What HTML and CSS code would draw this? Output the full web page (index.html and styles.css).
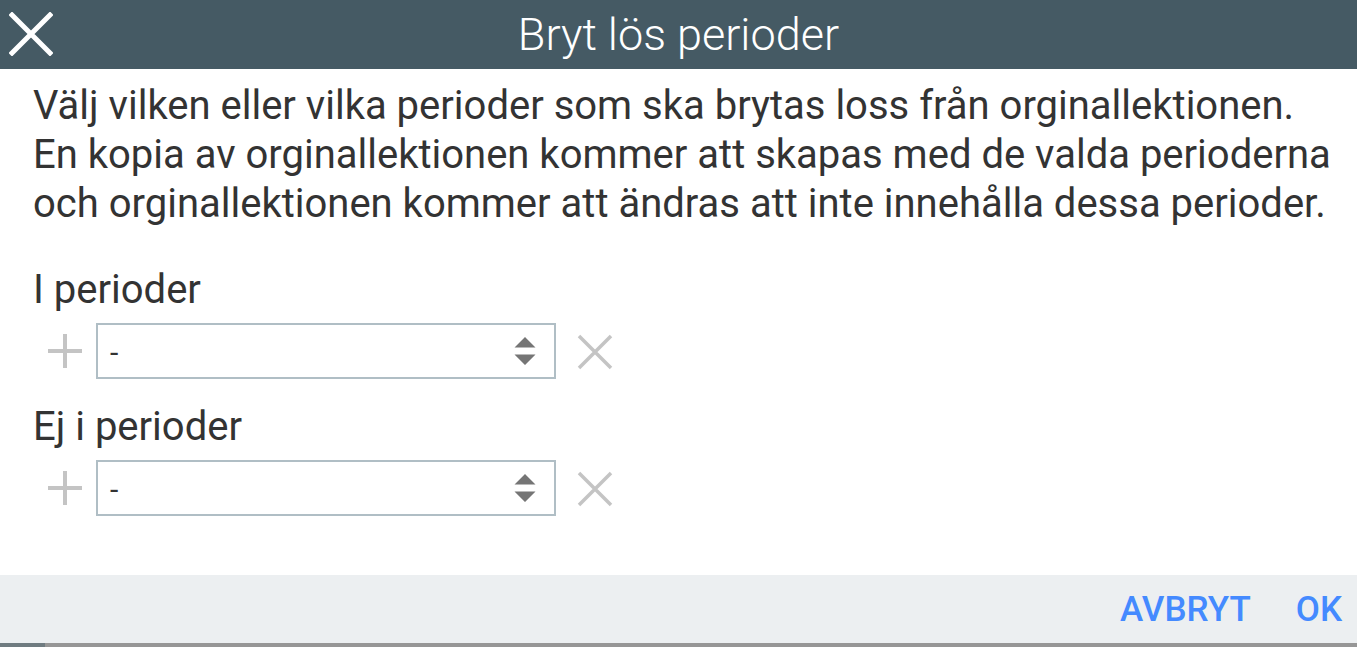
FILE: index.html
```html
<!DOCTYPE html>
<html lang="sv">
<head>
    <meta charset="UTF-8">
    <meta name="viewport" content="width=device-width, initial-scale=1.0">
    <title>Bryt lös perioder</title>
    <link rel="stylesheet" href="styles.css">
</head>
<body>
    <div class="dialog">
        <div class="header">
            <button class="close" aria-label="Stäng">
                <svg width="44" height="44" viewBox="0 0 44 44">
                    <path d="M3 3 L41 41 M41 3 L3 41" stroke="#fff" stroke-width="5" stroke-linecap="square"/>
                </svg>
            </button>
            <h1>Bryt lös perioder</h1>
        </div>

        <div class="content">
            <p class="info">
                Välj vilken eller vilka perioder som ska brytas loss från orginallektionen.<br>
                En kopia av orginallektionen kommer att skapas med de valda perioderna<br>
                och orginallektionen kommer att ändras att inte innehålla dessa perioder.
            </p>

            <div class="field">
                <label>I perioder</label>
                <div class="row">
                    <span class="add">
                        <svg width="36" height="36" viewBox="0 0 36 36">
                            <path d="M18 1 V35 M1 18 H35" stroke="#c4c4c4" stroke-width="4"/>
                        </svg>
                    </span>
                    <div class="select">
                        <span>-</span>
                        <svg width="22" height="28" viewBox="0 0 22 28">
                            <path d="M11 0 L21.5 10.5 H0.5 Z M11 28 L21.5 17.5 H0.5 Z" fill="#757575"/>
                        </svg>
                    </div>
                    <span class="remove">
                        <svg width="36" height="36" viewBox="0 0 36 36">
                            <path d="M2 2 L34 34 M34 2 L2 34" stroke="#c4c4c4" stroke-width="3.5"/>
                        </svg>
                    </span>
                </div>
            </div>

            <div class="field">
                <label>Ej i perioder</label>
                <div class="row">
                    <span class="add">
                        <svg width="36" height="36" viewBox="0 0 36 36">
                            <path d="M18 1 V35 M1 18 H35" stroke="#c4c4c4" stroke-width="4"/>
                        </svg>
                    </span>
                    <div class="select">
                        <span>-</span>
                        <svg width="22" height="28" viewBox="0 0 22 28">
                            <path d="M11 0 L21.5 10.5 H0.5 Z M11 28 L21.5 17.5 H0.5 Z" fill="#757575"/>
                        </svg>
                    </div>
                    <span class="remove">
                        <svg width="36" height="36" viewBox="0 0 36 36">
                            <path d="M2 2 L34 34 M34 2 L2 34" stroke="#c4c4c4" stroke-width="3.5"/>
                        </svg>
                    </span>
                </div>
            </div>
        </div>

        <div class="footer">
            <button class="action">AVBRYT</button>
            <button class="action">OK</button>
        </div>
        <div class="scrollbar"><span class="thumb"></span></div>
    </div>
</body>
</html>
```

FILE: styles.css
```css
body {
    margin: 0;
    font-family: Roboto, "Liberation Sans", sans-serif;
    color: #333;
    background: #fff;
}
.dialog {
    height: 647px;
    display: flex;
    flex-direction: column;
    overflow: hidden;
}
.header {
    height: 69px;
    background-color: #455a64;
    display: flex;
    align-items: center;
    justify-content: center;
    position: relative;
    flex-shrink: 0;
}
.header h1 {
    margin: 0;
    color: #fff;
    font-weight: 300;
    font-size: 45px;
}
.close {
    position: absolute;
    left: 9px;
    top: 12px;
    padding: 0;
    border: none;
    background: none;
    cursor: pointer;
}
.content {
    flex: 1;
    min-height: 0;
    padding: 12px 16px 0 33px;
}
.info {
    margin: 0 0 40px;
    font-size: 40px;
    line-height: 49px;
    white-space: nowrap;
}
.field label {
    display: block;
    font-size: 40px;
    line-height: 44px;
}
.row {
    display: flex;
    align-items: center;
    margin: 11px 0 26px 14px;
}
.add {
    display: flex;
    width: 49px;
}
.select {
    height: 52px;
    width: 426px;
    border: 2px solid #b0bec5;
    display: flex;
    align-items: center;
    justify-content: space-between;
    padding: 0 18px 0 12px;
    box-sizing: content-box;
    font-size: 30px;
}
.select span {
    margin-top: 2px;
}
.remove {
    display: flex;
    margin-left: 21px;
    margin-top: 2px;
}
.footer {
    height: 68px;
    background-color: #eceff1;
    display: flex;
    justify-content: flex-end;
    align-items: center;
    gap: 33px;
    padding-right: 9px;
    flex-shrink: 0;
}
.action {
    border: none;
    background: none;
    color: #448aff;
    font-family: Roboto, "Liberation Sans", sans-serif;
    font-weight: 500;
    font-size: 35px;
    padding: 8px 6px;
    cursor: pointer;
}
.scrollbar {
    height: 4px;
    background-color: #969696;
    flex-shrink: 0;
}
.thumb {
    display: block;
    width: 45px;
    height: 4px;
    background-color: #6f7b80;
}
```
